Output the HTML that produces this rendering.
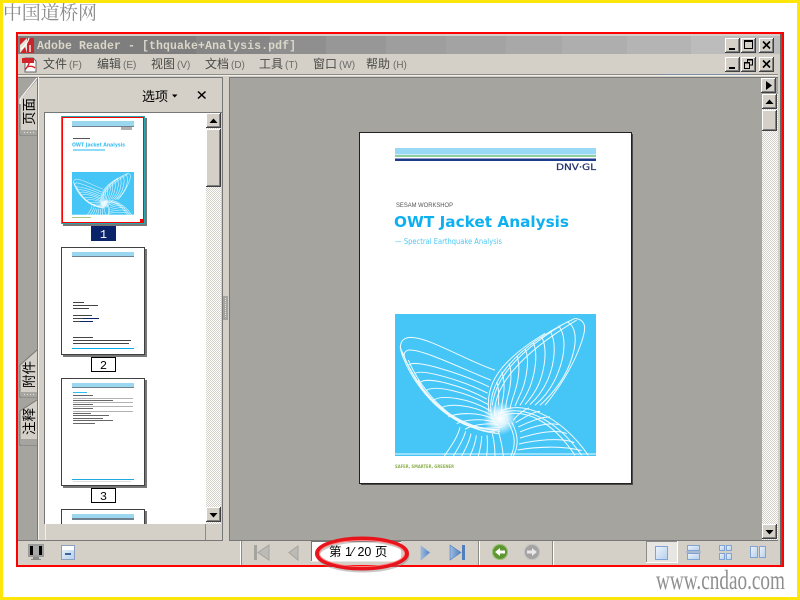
<!DOCTYPE html>
<html><head><meta charset="utf-8"><title>Adobe Reader</title>
<style>
html,body{margin:0;padding:0;background:#fff;width:800px;height:600px;overflow:hidden}
svg{display:block}
.cn{font-family:"Liberation Sans","WenQuanYi Zen Hei","Noto Sans CJK SC",sans-serif}
.menu{font-size:12px;fill:#4a4a46}
.key{font-size:10px;fill:#6a6a66}
</style></head><body>
<svg width="800" height="600" viewBox="0 0 800 600" xmlns="http://www.w3.org/2000/svg">
<defs>
<pattern id="dith" width="2" height="2" patternUnits="userSpaceOnUse"><rect width="2" height="2" fill="#fff"/><rect width="1" height="1" fill="#d4d0c8"/><rect x="1" y="1" width="1" height="1" fill="#d4d0c8"/></pattern>
<pattern id="dots" width="3" height="2" patternUnits="userSpaceOnUse"><rect width="1" height="1" fill="#e8e6e0"/></pattern>
<linearGradient id="blue" x1="0" y1="0" x2="1" y2="1"><stop offset="0" stop-color="#eef4fb"/><stop offset="1" stop-color="#b5cfec"/></linearGradient>
<linearGradient id="tri" x1="0" y1="0" x2="1" y2="0"><stop offset="0" stop-color="#9dbce2"/><stop offset="1" stop-color="#4f7fbd"/></linearGradient>
<radialGradient id="glow"><stop offset="0" stop-color="#fff"/><stop offset=".45" stop-color="#fff" stop-opacity=".8"/><stop offset="1" stop-color="#fff" stop-opacity="0"/></radialGradient>
<symbol id="b" viewBox="0 0 15 15" width="15" height="15">
<rect width="15" height="15" fill="#404040"/><rect width="14" height="14" fill="#fff"/><rect x="1" y="1" width="13" height="13" fill="#808080"/><rect x="1" y="1" width="12" height="12" fill="#d4d0c8"/>
</symbol>
<symbol id="art" viewBox="30 27 603 425" preserveAspectRatio="none">
<rect x="30" y="27" width="603" height="425" fill="#45c6f7"/>
<circle cx="345" cy="340" r="50" fill="url(#glow)"/>
<g fill="none" stroke="#fff" opacity=".92">
<path d="M330 195C250 170 130 95 75 97C40 100 40 130 60 170C90 240 180 370 330 380"/>
<path d="M52 140C90 245 190 385 345 372"/>
<path d="M45 125C85 235 200 395 350 365"/>
<path d="M70 165C110 260 210 375 340 385"/>
<path d="M100 225C130 290 220 365 345 378"/>
<path d="M318 225C240 195 110 130 70 135C55 140 55 150 62 165"/>
<path d="M72 180C85 160 230 205 312 245"/>
<path d="M90 205C110 190 230 225 308 264"/>
<path d="M108 230C130 215 230 240 306 282"/>
<path d="M125 255C150 240 240 258 310 298"/>
<path d="M145 285C170 268 250 278 315 316"/>
<path d="M165 310C190 293 260 298 320 330"/>
<path d="M190 335C215 323 280 318 328 342"/>
<path d="M215 355C240 343 290 338 335 352"/>
<path d="M240 372C260 360 300 352 340 358"/>
<path d="M320 335C300 240 380 130 570 40"/>
<path d="M330 335C320 250 400 150 575 45"/>
<path d="M312 320C300 240 340 170 480 85"/>
<path d="M322 300C330 220 400 140 530 60"/>
<path d="M570 40C610 45 600 80 590 110C570 170 530 240 480 300"/>
<path d="M545 50C570 60 580 100 560 160C545 210 510 260 465 300"/>
<path d="M520 62C545 90 540 150 520 200C505 240 480 275 450 300"/>
<path d="M495 78C515 110 510 170 490 220C475 255 455 280 435 298"/>
<path d="M470 95C488 130 480 190 462 235C450 262 435 282 420 298"/>
<path d="M445 113C460 145 450 205 435 245C425 268 415 285 405 300"/>
<path d="M420 132C435 160 425 220 410 258C402 275 395 290 390 303"/>
<path d="M395 152C408 180 400 230 388 265C382 282 378 295 376 307"/>
<path d="M372 175C382 200 378 240 368 275C364 290 362 302 362 312"/>
<path d="M350 200C360 225 358 260 352 290C350 302 350 312 350 320"/>
<path d="M335 230C342 250 342 275 340 300"/>
<path d="M345 320C400 285 520 320 610 450"/>
<path d="M340 326C410 298 510 335 590 450"/>
<path d="M355 330C420 310 500 345 570 450"/>
<path d="M385 345C400 325 415 315 432 308"/>
<path d="M392 352C420 335 445 320 465 318"/>
<path d="M400 365C430 350 470 335 495 335"/>
<path d="M405 380C440 365 490 350 520 358"/>
<path d="M405 398C450 385 510 370 545 385"/>
<path d="M402 416C450 405 530 395 568 412"/>
<path d="M398 434C450 425 530 420 590 436"/>
<path d="M380 350C400 390 402 420 385 452"/>
<path d="M370 352C392 390 392 420 378 452"/>
<path d="M178 452C200 420 218 395 225 366"/>
<path d="M205 452C222 425 236 400 242 378"/>
<path d="M230 452C245 425 254 405 258 385"/>
<path d="M255 452C265 430 272 410 274 390"/>
<path d="M280 452C286 430 290 412 290 392"/>
<path d="M305 452C308 430 308 410 306 390"/>
<path d="M330 452C330 430 328 410 322 385"/>
<path d="M355 452C352 425 348 405 340 378"/>
<path d="M30 446H633" stroke-width="4" opacity=".8"/>
</g>
</symbol>
</defs>

<!-- page frame -->
<rect width="800" height="600" fill="#ffe60a"/>
<rect x="3" y="3" width="794" height="594" fill="#fff"/>
<text x="3" y="19" class="cn" style="font-family:'Noto Serif CJK SC','Liberation Serif',serif" font-size="19" fill="#8c8c8c" textLength="94">中国道桥网</text>
<text x="656" y="589" font-family="Liberation Serif, serif" font-size="27" fill="#8f8f8f" textLength="129" lengthAdjust="spacingAndGlyphs">www.cndao.com</text>

<!-- window -->
<rect x="16" y="32" width="768" height="535" fill="#f00"/>
<rect x="18" y="34" width="764" height="531" fill="#d4d0c8"/>
<rect x="780" y="34" width="2" height="531" fill="#666"/>

<!-- title bar -->
<rect x="18" y="36" width="762" height="18" fill="#bdbdbd"/>
<rect x="18" y="36" width="178" height="18" fill="#7e7e7e"/>
<rect x="196" y="36" width="74" height="18" fill="#868686"/>
<rect x="270" y="36" width="56" height="18" fill="#8f8f8f"/>
<rect x="326" y="36" width="60" height="18" fill="#979797"/>
<rect x="386" y="36" width="60" height="18" fill="#9e9e9e"/>
<rect x="446" y="36" width="60" height="18" fill="#a3a3a3"/>
<rect x="506" y="36" width="56" height="18" fill="#a8a8a8"/>
<rect x="562" y="36" width="65" height="18" fill="#aeaeae"/>
<rect x="627" y="36" width="64" height="18" fill="#b4b4b4"/>
<rect x="691" y="36" width="35" height="18" fill="#bcbcbc"/>
<rect x="20" y="38" width="14" height="15" fill="#e6e2da"/>
<rect x="27" y="38" width="7" height="15" fill="#c8262a"/>
<path d="M20 38H27L20 45ZM20 53L25 47L27 53Z" fill="#c8262a"/>
<path d="M21 49C25 46 28 42 29 38M30 45V52" stroke="#fff" stroke-width="1.300" fill="none"/>
<text x="37" y="49" font-family="Liberation Mono, monospace" font-weight="bold" font-size="11.5" fill="#dbd7c9" textLength="259">Adobe Reader - [thquake+Analysis.pdf]</text>

<use href="#b" x="725" y="38"/><rect x="729" y="48" width="6" height="2" fill="#000"/>
<use href="#b" x="741" y="38"/><rect x="744.5" y="40.5" width="8" height="8" fill="none" stroke="#000"/><rect x="744" y="40" width="9" height="2" fill="#000"/>
<use href="#b" x="759" y="38"/><path d="M763 41.500L770 48.500M770 41.500L763 48.500" stroke="#000" stroke-width="1.600"/>
<use href="#b" x="725" y="57"/><rect x="729" y="67" width="6" height="2" fill="#000"/>
<use href="#b" x="741" y="57"/><path d="M744.500 62.500H749.500V68.500H744.500ZM747.500 62V59.500H752.500V65H750" fill="none" stroke="#000"/><rect x="744" y="62" width="6" height="1.500" fill="#000"/><rect x="747" y="59" width="6" height="1.500" fill="#000"/>
<use href="#b" x="759" y="57"/><path d="M763 60.500L770 67.500M770 60.500L763 67.500" stroke="#000" stroke-width="1.600"/>

<!-- menu bar -->
<path d="M25 58H33L36 61V72H25Z" fill="#fff" stroke="#666"/>
<rect x="22" y="58" width="12" height="5" fill="#d2232a"/>
<path d="M25 70C28 66 30 63 29 61M27 67C30 66 33 66 35 68" stroke="#d2232a" stroke-width="1.300" fill="none"/>
<g class="cn">
<text x="43" y="68" class="menu">文件</text><text x="69" y="68" class="key">(F)</text>
<text x="97" y="68" class="menu">编辑</text><text x="123" y="68" class="key">(E)</text>
<text x="151" y="68" class="menu">视图</text><text x="177" y="68" class="key">(V)</text>
<text x="205" y="68" class="menu">文档</text><text x="231" y="68" class="key">(D)</text>
<text x="259" y="68" class="menu">工具</text><text x="285" y="68" class="key">(T)</text>
<text x="313" y="68" class="menu">窗口</text><text x="339" y="68" class="key">(W)</text>
<text x="366" y="68" class="menu">帮助</text><text x="393" y="68" class="key">(H)</text>
</g>
<rect x="18" y="74" width="760" height="1" fill="#8d8b85"/>
<rect x="18" y="75" width="760" height="1" fill="#f0eee8"/>
<rect x="660" y="74" width="90" height="1" fill="#7f8fa6"/>

<!-- left panel -->
<rect x="18" y="77" width="205" height="464" fill="#d4d0c8"/>
<rect x="18" y="77" width="204.500" height="1" fill="#777"/>
<rect x="222" y="77" width="1" height="463" fill="#777"/>
<rect x="18" y="78" width="19" height="462" fill="#a6a49f"/>
<rect x="37" y="78" width="1" height="462" fill="#777"/>
<!-- tabs -->
<path d="M37 78V79L20 99V135H37" fill="#d4d0c8" stroke="#777"/>
<path d="M37 78L20 99V104" fill="none" stroke="#fff"/>
<rect x="21" y="130" width="16" height="5" fill="#a6a49f"/><rect x="23" y="132" width="12" height="1" fill="url(#dots)"/>
<path d="M37 350L20 365V397H37" fill="#d4d0c8" stroke="#777"/>
<rect x="21" y="392" width="16" height="5" fill="#a6a49f"/><rect x="23" y="394" width="12" height="1" fill="url(#dots)"/>
<path d="M37 400L20 411V445H37" fill="#d4d0c8" stroke="#777"/>
<rect x="21" y="439" width="16" height="5" fill="#a6a49f"/><rect x="23" y="441" width="12" height="1" fill="url(#dots)"/>
<rect x="38" y="77" width="1" height="463" fill="#f4f2ec"/>
<g class="cn" font-size="13.5" fill="#000">
<text transform="translate(34,125) rotate(-90)">页面</text>
<text transform="translate(34,388) rotate(-90)">附件</text>
<text transform="translate(34,435) rotate(-90)">注释</text>
</g>
<text x="142" y="101" class="cn" font-size="13" fill="#000">选项</text>
<path d="M172 94.500H177.500L174.700 97.500Z" fill="#000"/>
<path d="M198 91.500L205.500 98.500M205.500 91.500L198 98.500" stroke="#000" stroke-width="1.500"/>

<!-- thumbs pane -->
<rect x="44" y="112" width="178" height="1" fill="#777"/>
<rect x="44" y="112" width="1" height="412" fill="#777"/>
<rect x="45" y="113" width="161" height="411" fill="#fff"/>
<rect x="206" y="113" width="16" height="411" fill="url(#dith)"/>
<rect x="221" y="113" width="1" height="411" fill="#d4d0c8"/>
<use href="#b" x="206" y="113"/><path d="M209.500 123H217.500L213.500 118.500Z" fill="#000"/>
<rect x="206" y="129" width="15" height="58" fill="#404040"/><rect x="206" y="129" width="14" height="57" fill="#fff"/><rect x="207" y="130" width="13" height="56" fill="#808080"/><rect x="207" y="130" width="12" height="55" fill="#d4d0c8"/>
<use href="#b" x="206" y="507"/><path d="M209.500 513H217.500L213.500 517.500Z" fill="#000"/>

<!-- thumb 1 -->
<g>
<rect x="63" y="118" width="84" height="108" fill="#777"/>
<rect x="61" y="116" width="84" height="108" fill="#2aa7ad"/>
<rect x="62" y="117" width="82" height="106" fill="#f00"/>
<rect x="63" y="118" width="80" height="104" fill="#fff"/>
<rect x="72" y="121" width="62" height="5" fill="#9bd8f0"/>
<rect x="72" y="126" width="62" height="1" fill="#6f7f90"/>
<rect x="121" y="127" width="11" height="3" fill="#b0b0b0"/>
<rect x="73" y="138" width="17" height="1" fill="#555"/>
<text x="72" y="146.500" font-family="DejaVu Sans, sans-serif" font-weight="bold" font-size="4.800" fill="#38bdf2" textLength="53" lengthAdjust="spacingAndGlyphs">OWT Jacket Analysis</text>
<rect x="73" y="149" width="32" height="2" fill="#8fdcf8"/>
<use href="#art" x="72" y="172" width="62" height="43" stroke-width="5"/>
<rect x="72" y="217" width="19" height="1" fill="#a8c77e"/>
<rect x="140" y="219" width="4" height="4" fill="#f00"/>
</g>
<rect x="91" y="226" width="25" height="15" fill="#0a246a"/>
<text x="103.500" y="238" text-anchor="middle" font-family="Liberation Mono, monospace" font-size="12" fill="#fff">1</text>

<!-- thumb 2 -->
<g>
<rect x="63" y="249" width="84" height="108" fill="#777"/>
<rect x="61.500" y="247.500" width="83" height="107" fill="#fff" stroke="#404040"/>
<rect x="72" y="252" width="62" height="4" fill="#9bd8f0"/>
<rect x="72" y="256" width="62" height="1" fill="#6f8090"/>
<g fill="#444">
<rect x="73" y="302" width="11" height="1"/><rect x="73" y="305" width="25" height="1"/><rect x="73" y="308" width="16" height="1"/>
<rect x="73" y="315" width="19" height="1"/><rect x="73" y="318" width="10" height="1"/><rect x="73" y="321" width="8" height="1"/>
<rect x="73" y="337" width="20" height="1"/><rect x="73" y="340" width="58" height="1"/><rect x="73" y="343" width="56" height="1"/>
</g>
<rect x="83" y="318" width="16" height="1" fill="#0a246a"/><rect x="80" y="321" width="13" height="1" fill="#0a246a"/>
<rect x="72" y="348" width="62" height="1" fill="#00aeef"/>
</g>
<rect x="91.500" y="357.500" width="24" height="14" fill="#fff" stroke="#000"/>
<text x="103.500" y="369" text-anchor="middle" font-family="Liberation Mono, monospace" font-size="12" fill="#000">2</text>

<!-- thumb 3 -->
<g>
<rect x="63" y="380" width="84" height="108" fill="#777"/>
<rect x="61.500" y="378.500" width="83" height="107" fill="#fff" stroke="#404040"/>
<rect x="72" y="383" width="62" height="4" fill="#9bd8f0"/>
<rect x="72" y="387" width="62" height="1" fill="#6f8090"/>
<rect x="73" y="392" width="14" height="1" fill="#2dbbf0"/>
<g fill="#666">
<rect x="73" y="395" width="20" height="1"/><rect x="73" y="398" width="60" height="1" opacity=".5"/><rect x="73" y="400" width="40" height="1"/>
<rect x="73" y="402" width="60" height="1" opacity=".5"/><rect x="73" y="404" width="20" height="1"/><rect x="73" y="406" width="60" height="1" opacity=".5"/>
<rect x="73" y="408" width="20" height="1"/><rect x="73" y="411" width="60" height="1" opacity=".5"/><rect x="73" y="413" width="18" height="1"/>
<rect x="73" y="415" width="36" height="1"/><rect x="73" y="418" width="30" height="1"/><rect x="73" y="420" width="40" height="1"/><rect x="73" y="423" width="22" height="1"/>
</g>
<rect x="72" y="479" width="62" height="1" fill="#1ea9de"/>
<rect x="73" y="481" width="58" height="1" fill="#ddd"/>
</g>
<rect x="91.500" y="488.500" width="24" height="14" fill="#fff" stroke="#000"/>
<text x="103.500" y="500" text-anchor="middle" font-family="Liberation Mono, monospace" font-size="12" fill="#000">3</text>

<!-- thumb 4 -->
<rect x="63" y="511" width="84" height="13" fill="#777"/>
<rect x="61.500" y="509.500" width="83" height="20" fill="#fff" stroke="#404040"/>
<rect x="72" y="514" width="62" height="4" fill="#9bd8f0"/>
<rect x="72" y="518" width="62" height="2" fill="#6f8090"/>
<rect x="45" y="524" width="161" height="16" fill="#d4d0c8"/>
<rect x="205" y="524" width="1" height="16" fill="#8d8b85"/>
<rect x="45" y="524" width="1" height="16" fill="#f2f0ea"/>
<rect x="18" y="540" width="205" height="1" fill="#777"/>

<!-- splitter -->
<rect x="223" y="296" width="5" height="24" fill="#a6a49f"/>
<rect x="224" y="298" width="3" height="20" fill="url(#dots)"/>

<!-- document area -->
<rect x="229" y="77" width="549" height="463" fill="#a6a49f"/>
<rect x="229" y="77" width="549" height="1" fill="#777"/>
<rect x="229" y="77" width="1" height="463" fill="#777"/>
<rect x="229" y="540" width="549" height="1" fill="#777"/>
<rect x="761" y="78" width="17" height="462" fill="#a6a49f"/>
<use href="#b" x="761" y="78"/><path d="M766 81V90L772 85.500Z" fill="#000"/>
<rect x="762" y="94" width="16" height="446" fill="url(#dith)"/>
<use href="#b" x="762" y="94"/><path d="M765.500 104H773.500L769.500 99.500Z" fill="#000"/>
<rect x="762" y="110" width="15" height="21" fill="#404040"/><rect x="762" y="110" width="14" height="20" fill="#fff"/><rect x="763" y="111" width="13" height="19" fill="#808080"/><rect x="763" y="111" width="12" height="18" fill="#d4d0c8"/>
<use href="#b" x="762" y="524"/><path d="M765.500 530H773.500L769.500 534.500Z" fill="#000"/>

<!-- PDF page -->
<rect x="361" y="134" width="272" height="351" fill="#4a4a4a"/>
<rect x="359.500" y="132.500" width="272" height="351" fill="#fff" stroke="#222" stroke-width="1"/>
<rect x="395" y="148" width="201" height="6.500" fill="#99d9f5"/>
<rect x="395" y="155" width="201" height="2" fill="#8fcf9f"/>
<rect x="395" y="158.500" width="201" height="2.500" fill="#1d3b8b"/>
<text x="556" y="170" font-family="DejaVu Sans, sans-serif" font-size="8.500" fill="#27336e" stroke="#27336e" stroke-width=".25" textLength="40" lengthAdjust="spacingAndGlyphs">DNV·GL</text>
<text x="396" y="207" font-family="Liberation Sans, sans-serif" font-size="6.500" fill="#555" textLength="57" lengthAdjust="spacingAndGlyphs">SESAM WORKSHOP</text>
<text x="394" y="227" font-family="DejaVu Sans, sans-serif" font-weight="bold" font-size="15" fill="#0db0f0" textLength="175" lengthAdjust="spacingAndGlyphs">OWT Jacket Analysis</text>
<text x="395" y="244" font-family="DejaVu Sans, sans-serif" font-size="7.500" fill="#4cc8f6" textLength="107" lengthAdjust="spacingAndGlyphs">— Spectral Earthquake Analysis</text>
<use href="#art" x="395" y="314" width="201" height="142" stroke-width="3"/>
<text x="395" y="468" font-family="DejaVu Sans, sans-serif" font-weight="bold" font-size="4.500" fill="#8db04e" textLength="59" lengthAdjust="spacingAndGlyphs">SAFER, SMARTER, GREENER</text>

<!-- bottom toolbar -->
<rect x="28" y="544" width="16" height="13" fill="#9a9a9a"/>
<rect x="30" y="546" width="12" height="9" fill="#000"/>
<rect x="33" y="546" width="6" height="9" fill="#a8a8a8"/>
<rect x="33" y="557" width="6" height="2" fill="#888"/><rect x="31" y="559" width="10" height="1" fill="#888"/>
<rect x="61.500" y="545.500" width="13" height="14" fill="url(#blue)" stroke="#8ba0c0"/>
<rect x="62" y="546" width="12" height="4" fill="#fff"/>
<rect x="65" y="553" width="6" height="2" fill="#3f65a5"/>
<rect x="240" y="541" width="1" height="24" fill="#fff"/><rect x="241" y="541" width="1" height="24" fill="#8d8b85"/>

<rect x="254" y="545" width="3" height="15" fill="#a5a39e"/>
<path d="M269 545L258 552.500L269 560Z" fill="#bdbbb5" stroke="#a5a39e"/>
<path d="M298 546L289 552.500L298 560Z" fill="#bdbbb5" stroke="#a5a39e"/>

<rect x="311" y="541.500" width="90" height="20" fill="#fff"/>
<rect x="311" y="541" width="90" height="1" fill="#777"/><rect x="311" y="541" width="1" height="20" fill="#777"/>
<text x="329" y="556" class="cn" font-size="12.500" fill="#000" xml:space="preserve">第 1⁄ 20 页</text>

<ellipse cx="363" cy="556" rx="45" ry="15" fill="none" stroke="#888" stroke-width="3" opacity=".45"/>
<ellipse cx="362" cy="553.500" rx="45" ry="15" fill="none" stroke="#e8141c" stroke-width="4"/>
<ellipse cx="362" cy="553.500" rx="42.500" ry="13" fill="none" stroke="#f88" stroke-width="1"/>

<path d="M421 546L430 552.500L421 560Z" fill="url(#tri)" stroke="#8fb0d8" stroke-width=".6"/>
<path d="M450 545L461 552.500L450 560Z" fill="url(#tri)" stroke="#4f7fbd" stroke-width=".6"/>
<rect x="462" y="545" width="3" height="15" fill="#4f7fbd"/>

<rect x="478" y="541" width="1" height="24" fill="#8d8b85"/><rect x="479" y="541" width="1" height="24" fill="#fff"/>
<circle cx="500" cy="552" r="8" fill="#5e9732"/><circle cx="500" cy="552" r="7.500" fill="none" stroke="#9fc57d"/>
<path d="M495 552L500 548V550.500H505V553.500H500V556Z" fill="#fff"/>
<circle cx="532" cy="552" r="8" fill="#a3a3a3"/><circle cx="532" cy="552" r="7.500" fill="none" stroke="#c3c3c3"/>
<path d="M537 552L532 548V550.500H527V553.500H532V556Z" fill="#e8e8e8"/>
<rect x="552" y="541" width="1" height="24" fill="#8d8b85"/><rect x="553" y="541" width="1" height="24" fill="#fff"/>

<rect x="646" y="541" width="32" height="22" fill="#e7e6e2"/>
<rect x="646" y="541" width="32" height="1" fill="#8d8b85"/><rect x="646" y="541" width="1" height="22" fill="#8d8b85"/>
<rect x="646" y="562" width="32" height="1" fill="#fff"/><rect x="677" y="541" width="1" height="22" fill="#fff"/>
<rect x="655.500" y="546.500" width="12" height="13" fill="url(#blue)" stroke="#7fa3d4"/>
<rect x="687.500" y="545.500" width="12" height="5" fill="url(#blue)" stroke="#7fa3d4"/>
<rect x="687.500" y="553.500" width="12" height="6" fill="url(#blue)" stroke="#7fa3d4"/>
<path d="M686 552H701" stroke="#7fa3d4"/>
<g fill="url(#blue)" stroke="#7fa3d4">
<rect x="719.500" y="545.500" width="5" height="5"/><rect x="726.500" y="545.500" width="5" height="5"/>
<rect x="719.500" y="553.500" width="5" height="6"/><rect x="726.500" y="553.500" width="5" height="6"/>
<rect x="750.500" y="546.500" width="7" height="11"/><rect x="759.500" y="546.500" width="6" height="11"/>
</g>
</svg>
</body></html>
